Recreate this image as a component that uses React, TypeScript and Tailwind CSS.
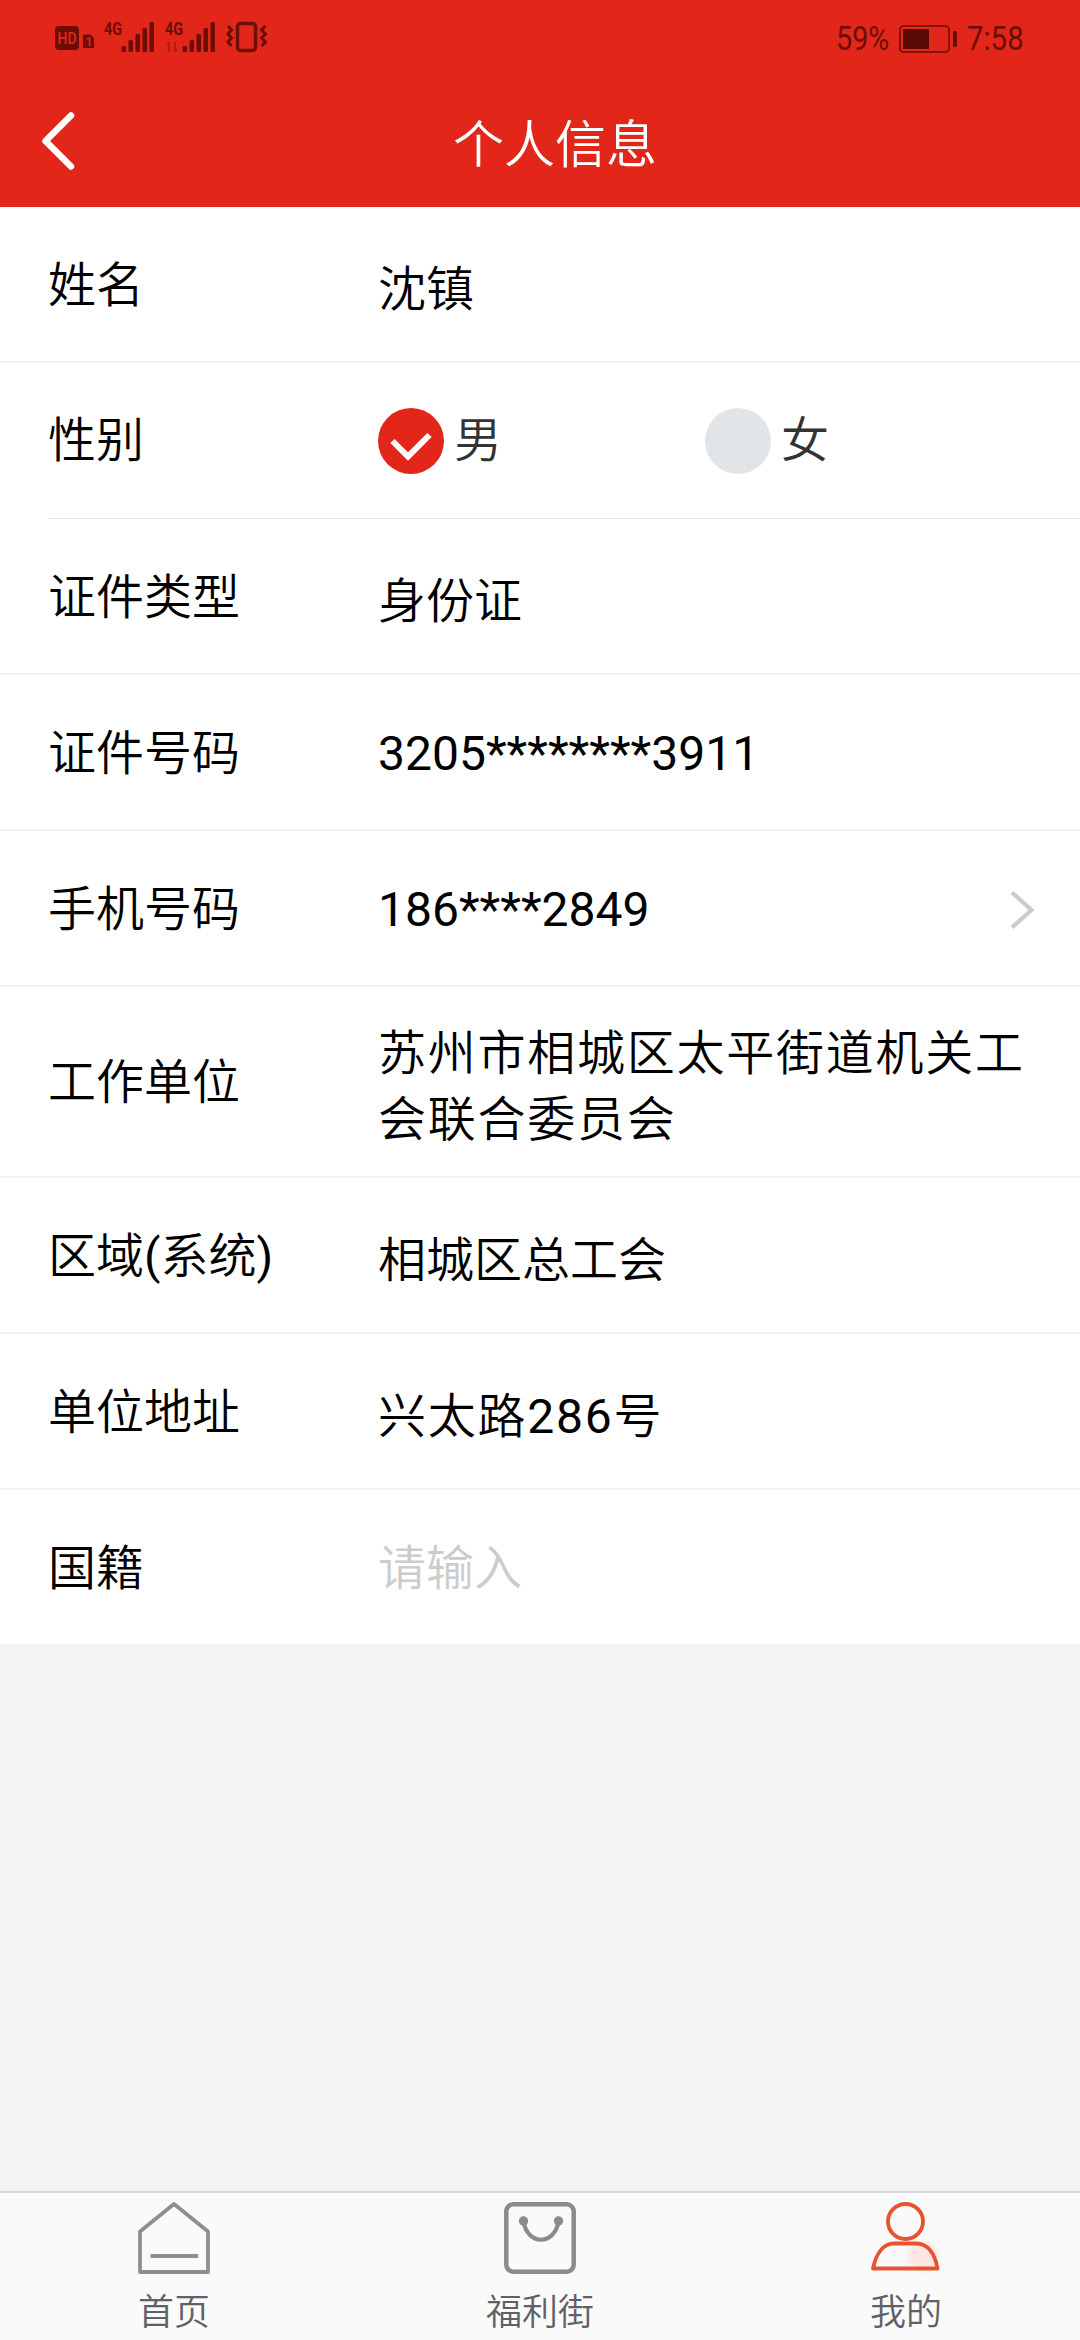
import type { ReactNode } from "react";

interface RowProps {
  label: string;
  children: ReactNode;
  tall?: boolean;
  arrow?: boolean;
}

function Row({ label, children, tall, arrow }: RowProps) {
  return (
    <div
      className={`flex items-center border-b-2 border-[#f2f2f2] pl-12 pt-[3px] ${tall ? "h-[191px]" : "h-[156px]"}`}
    >
      <span className="w-[330px] shrink-0">{label}</span>
      <div className="flex-1">{children}</div>
      {arrow && (
        <svg className="mr-[44px]" width="28" height="42" viewBox="0 0 28 42" fill="none">
          <path d="M4 3.500L23.500 21L4 38.500" stroke="#ccc" strokeWidth="4.200" />
        </svg>
      )}
    </div>
  );
}

function Radio({ label, checked }: { label: string; checked?: boolean }) {
  return (
    <div className="flex w-[327px] items-center gap-[10px] text-[#333]">
      <span
        className={`flex size-[66px] items-center justify-center rounded-full ${checked ? "bg-[#e2271a]" : "bg-[#e2e5e7]"}`}
      >
        {checked && (
          <svg width="66" height="66" viewBox="0 0 66 66" fill="none">
            <path d="M14.500 33L30 48.500L51.500 27" stroke="#fff" strokeWidth="6" />
          </svg>
        )}
      </span>
      <span>{label}</span>
    </div>
  );
}

function Signal() {
  return (
    <g fill="currentColor">
      <rect x="0" y="24" width="4.5" height="6" rx="1.5" />
      <rect x="7" y="18" width="4.5" height="12" rx="1.5" />
      <rect x="14" y="12" width="4.5" height="18" rx="1.5" />
      <rect x="21" y="6" width="4.5" height="24" rx="1.5" />
      <rect x="28" y="0" width="4.5" height="30" rx="1.5" />
    </g>
  );
}

function StatusBar() {
  return (
    <div className="flex h-[75px] items-start justify-between pl-[54px] pr-[53px] text-[#6e0d07]">
      <svg className="mt-[18px]" width="216" height="38" viewBox="54 18 216 38" fill="none">
        <rect x="55" y="26" width="24" height="24" rx="4" fill="currentColor" />
        <text x="57.5" y="44" fontSize="16" fontWeight="500" textLength="19" lengthAdjust="spacingAndGlyphs" fill="#e2271a">HD</text>
        <path d="M83 34.5H90.5L94 38V48H83Z" fill="currentColor" />
        <text x="85.500" y="46" fontSize="12" fontWeight="700" fill="#e2271a">1</text>
        <text x="104" y="35" fontSize="18" fontWeight="700" textLength="18" lengthAdjust="spacingAndGlyphs" fill="currentColor">4G</text>
        <g transform="translate(121.5 22)"><Signal /></g>
        <text x="165" y="35" fontSize="18" fontWeight="700" textLength="18" lengthAdjust="spacingAndGlyphs" fill="currentColor">4G</text>
        <path d="M169 52V43L167 45M175 42V51L177.500 49" stroke="#a91a10" strokeWidth="1.6" />
        <g transform="translate(182.500 22)"><Signal /></g>
        <rect x="237.500" y="23.500" width="18" height="27" rx="3" stroke="currentColor" strokeWidth="3.4" />
        <path d="M228 26L231.500 30L228 34L231.500 38L228 42L231.500 46" stroke="currentColor" strokeWidth="3" />
        <path d="M265.500 26L261.500 30L265.500 34L261.500 38L265.500 42L261.500 46" stroke="currentColor" strokeWidth="3" />
      </svg>
      <div className="mt-[19px] flex h-10 items-center text-[33px] leading-10">
        <span className="w-[62px] origin-left scale-x-[0.87]">59%</span>
        <svg className="ml-[1px] w-[60px]" width="60" height="28" viewBox="0 0 60 28" fill="none">
          <rect x="1" y="1" width="49" height="26" rx="3.500" stroke="currentColor" strokeWidth="1.6" />
          <rect x="4" y="4" width="26" height="20" fill="#5c0a05" />
          <rect x="54" y="6" width="4" height="16" rx="1.500" fill="currentColor" />
        </svg>
        <span className="ml-[8px] w-[60px] origin-left scale-x-[0.89]">7:58</span>
      </div>
    </div>
  );
}

function HomeIcon() {
  return (
    <svg width="72" height="72" viewBox="0 0 72 72" fill="none" stroke="#8e8e8e" strokeWidth="3.800" strokeLinejoin="round">
      <path d="M2 29.500L36 2L70 29.500V70H2Z" />
      <path d="M12.500 54H60" strokeWidth="4" />
    </svg>
  );
}

function BagIcon() {
  return (
    <svg width="72" height="72" viewBox="0 0 72 72" fill="none" stroke="#8b8b8b">
      <rect x="2.300" y="2.300" width="67.400" height="67.400" rx="7" strokeWidth="4.500" />
      <path d="M19.500 19C23 44 51 44 54.500 19" strokeWidth="4.200" />
      <circle cx="19.500" cy="19" r="4.700" fill="#8b8b8b" stroke="none" />
      <circle cx="54.500" cy="19" r="4.700" fill="#8b8b8b" stroke="none" />
    </svg>
  );
}

function UserIcon() {
  return (
    <svg width="72" height="72" viewBox="0 0 72 72" fill="none">
      <defs>
        <radialGradient id="blush">
          <stop offset="0.55" stopColor="#ffe6e4" />
          <stop offset="1" stopColor="#ffe6e4" stopOpacity="0" />
        </radialGradient>
      </defs>
      <circle cx="53" cy="54" r="19" fill="url(#blush)" />
      <g stroke="#e5532f" strokeWidth="3.800" strokeLinejoin="round">
        <circle cx="35.500" cy="19.500" r="17.500" />
        <path d="M3 66.500C6 52 13 41.500 24 41.500H46C58 41.500 65 52 67.500 66.500Z" />
      </g>
    </svg>
  );
}

const tabs = [
  { label: "首页", icon: <HomeIcon /> },
  { label: "福利街", icon: <BagIcon /> },
  { label: "我的", icon: <UserIcon /> },
];

function TabBar() {
  return (
    <nav className="h-[149px] overflow-hidden border-t-2 border-[#d9d9d9] bg-[#fafafa]">
      <div className="-mx-[9px] grid grid-cols-3 pt-[9px]">
        {tabs.map((tab) => (
          <div key={tab.label} className="flex flex-col items-center">
            {tab.icon}
            <span className="mt-[13px] text-[36px] leading-[52px] text-[#5f6068]">{tab.label}</span>
          </div>
        ))}
      </div>
    </nav>
  );
}

function App() {
  return (
    <div className="flex h-[2340px] w-[1080px] flex-col overflow-hidden bg-[#f4f4f4] font-['Roboto','Noto_Sans_CJK_SC_DemiLight','Noto_Sans_CJK_SC',sans-serif] text-[48px] leading-[66px] text-black">
      <header className="h-[207px] bg-[#e2271a]">
        <StatusBar />
        <div className="relative flex h-[132px] items-center justify-center pl-[30px] pt-[10px] text-white">
          <svg className="absolute left-[40px] top-[35px]" width="38" height="62" viewBox="0 0 38 62" fill="none">
            <path d="M31 5.500L5.500 31L31 56.500" stroke="#fff" strokeWidth="6.500" strokeLinecap="round" strokeLinejoin="round" />
          </svg>
          <h1 className="text-[51px]">个人信息</h1>
        </div>
      </header>

      <main className="flex-1">
        <div className="bg-white">
          <Row label="姓名">
            <p className="pt-2">沈镇</p>
          </Row>
          <div className="ml-12 flex h-[156px] items-center border-b border-[#e3e3e3]">
            <span className="w-[330px]">性别</span>
            <Radio label="男" checked />
            <Radio label="女" />
          </div>
          <Row label="证件类型">
            <p className="pt-2">身份证</p>
          </Row>
          <Row label="证件号码">3205********3911</Row>
          <Row label="手机号码" arrow>186****2849</Row>
          <Row label="工作单位" tall>
            <p className="w-[660px] pt-2 tracking-[1.75px]">苏州市相城区太平街道机关工会联合委员会</p>
          </Row>
          <Row label="区域(系统)">
            <p className="pt-2">相城区总工会</p>
          </Row>
          <Row label="单位地址">
            <p className="pt-2 tracking-[1.75px]">兴太路286号</p>
          </Row>
          <Row label="国籍">
            <span className="text-[#ccc]">请输入</span>
          </Row>
        </div>
      </main>

      <TabBar />
    </div>
  );
}

export default App;
